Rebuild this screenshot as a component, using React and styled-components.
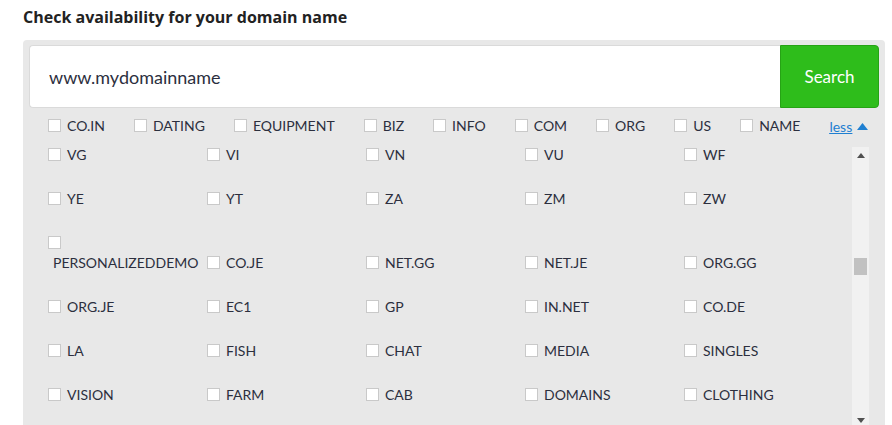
import styled, { createGlobalStyle } from 'styled-components';

const GlobalStyle = createGlobalStyle`
    * { box-sizing: border-box; }
    body {
        margin: 0;
        background: #ffffff;
        font-family: 'Lato', 'Open Sans', sans-serif;
        color: #2c2f3e;
    }
`;

const featured = ['CO.IN', 'DATING', 'EQUIPMENT', 'BIZ', 'INFO', 'COM', 'ORG', 'US', 'NAME'];

const rows = [
    ['VG', 'VI', 'VN', 'VU', 'WF'],
    ['YE', 'YT', 'ZA', 'ZM', 'ZW'],
    ['PERSONALIZEDDEMO', 'CO.JE', 'NET.GG', 'NET.JE', 'ORG.GG'],
    ['ORG.JE', 'EC1', 'GP', 'IN.NET', 'CO.DE'],
    ['LA', 'FISH', 'CHAT', 'MEDIA', 'SINGLES'],
    ['VISION', 'FARM', 'CAB', 'DOMAINS', 'CLOTHING'],
];

function Tld({ name, wrap }) {
    return (
        <Option $wrap={wrap}>
            <Box />
            <Label $wrap={wrap}>{name}</Label>
        </Option>
    );
}

export default function App() {
    return (
        <>
            <GlobalStyle />
            <Page>
                <Title>Check availability for your domain name</Title>
                <Panel>
                    <SearchBar>
                        <DomainInput defaultValue="www.mydomainname" />
                        <SearchButton>Search</SearchButton>
                    </SearchBar>

                    <Featured>
                        {featured.map(name => (
                            <Tld key={name} name={name} />
                        ))}
                        <Less href="#">
                            <span>less</span>
                            <svg width="11" height="7" viewBox="0 0 11 7">
                                <polygon points="0,7 5.5,0 11,7" fill="#1f7fd1" />
                            </svg>
                        </Less>
                    </Featured>

                    <ListArea>
                        <Grid>
                            {rows.flat().map(name => (
                                <Tld key={name} name={name} wrap={name.length > 14} />
                            ))}
                        </Grid>
                        <Scrollbar>
                            <ScrollButton>
                                <svg width="8" height="5" viewBox="0 0 8 5">
                                    <polygon points="0,5 4,0 8,5" fill="#505050" />
                                </svg>
                            </ScrollButton>
                            <Track>
                                <Thumb />
                            </Track>
                            <ScrollButton>
                                <svg width="8" height="5" viewBox="0 0 8 5">
                                    <polygon points="0,0 8,0 4,5" fill="#505050" />
                                </svg>
                            </ScrollButton>
                        </Scrollbar>
                    </ListArea>
                </Panel>
            </Page>
        </>
    );
}

const Page = styled.div`
    padding: 7px 7px 0 23px;
    height: 425px;
    overflow: hidden;
`;

const Title = styled.h1`
    margin: 0 0 13px;
    font-family: 'Open Sans', 'Lato', sans-serif;
    font-size: 16px;
    line-height: 20px;
    font-weight: 700;
    color: #222222;
`;

const Panel = styled.div`
    width: 862px;
    background: #e8e8e8;
    border-radius: 4px;
    padding: 5px 6px 0;
`;

const SearchBar = styled.div`
    display: flex;
    height: 63px;
`;

const DomainInput = styled.input`
    flex: 1;
    min-width: 0;
    border: 1px solid #dadada;
    border-right: none;
    border-radius: 4px 0 0 4px;
    padding: 0 0 0 19px;
    font-family: 'Lato', 'Open Sans', sans-serif;
    font-size: 18px;
    color: #2c2f3e;
    background: #ffffff;
    outline: none;
`;

const SearchButton = styled.button`
    width: 99px;
    border: 1px solid #26a315;
    border-radius: 0 4px 4px 0;
    background: #2ebd1b;
    color: #ffffff;
    font-family: 'Lato', 'Open Sans', sans-serif;
    font-size: 17px;
    cursor: pointer;
`;

const Featured = styled.div`
    display: flex;
    align-items: center;
    gap: 29px;
    height: 20px;
    margin-top: 8px;
    padding: 0 13px 0 19px;
`;

const Option = styled.label`
    display: flex;
    flex-wrap: ${props => (props.$wrap ? 'wrap' : 'nowrap')};
    align-items: center;
    font-size: 14px;
    line-height: 20px;
    white-space: nowrap;
`;

const Box = styled.span`
    display: inline-block;
    width: 13px;
    height: 13px;
    margin: 3px 1px 4px 0;
    background: #ffffff;
    border: 1px solid #c9c9c9;
`;

const Label = styled.span`
    margin-left: 5px;
    flex-basis: ${props => (props.$wrap ? '100%' : 'auto')};
`;

const Less = styled.a`
    display: flex;
    align-items: center;
    gap: 5px;
    margin-left: auto;
    font-size: 14px;
    color: #1f7fd1;
    span {
        text-decoration: underline;
    }
`;

const ListArea = styled.div`
    display: flex;
    margin-top: 9px;
    padding-left: 19px;
    height: 284px;
    overflow: hidden;
`;

const Grid = styled.div`
    display: grid;
    grid-template-columns: repeat(5, 159px);
    grid-auto-rows: auto;
    row-gap: 24px;
    align-items: end;
    align-content: start;
`;

const Scrollbar = styled.div`
    display: flex;
    flex-direction: column;
    width: 17px;
    margin: 2px 0 0 9px;
    background: #f1f1f1;
`;

const ScrollButton = styled.div`
    display: flex;
    align-items: center;
    justify-content: center;
    height: 17px;
    flex-shrink: 0;
`;

const Track = styled.div`
    flex: 1;
    padding: 94px 2px 0;
`;

const Thumb = styled.div`
    height: 17px;
    background: #c1c1c1;
`;
